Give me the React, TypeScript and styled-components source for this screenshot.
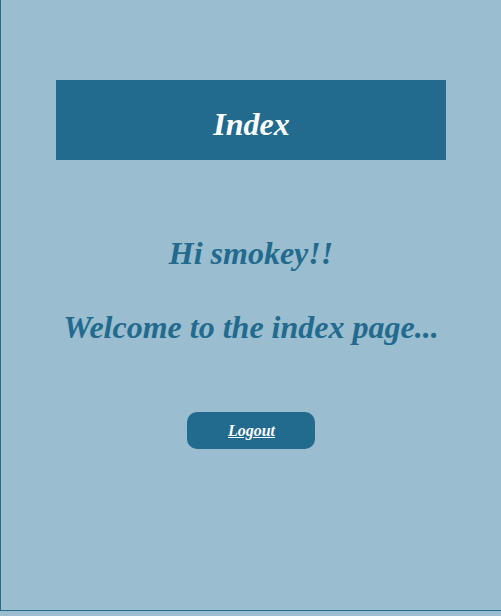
import React from "react";
import styled, { createGlobalStyle } from "styled-components";

const GlobalStyle = createGlobalStyle`
  html, body {
    margin: 0;
    padding: 0;
    background: #9abecf;
  }
  body {
    font-family: "Liberation Serif", "Times New Roman", serif;
  }
`;

const Page = styled.div`
  box-sizing: border-box;
  width: 502px;
  height: 611px;
  border-left: 1px solid #226a8e;
  border-bottom: 1px solid #226a8e;
  background: #9abecf;
  display: flex;
  flex-direction: column;
  align-items: center;
  padding-top: 80px;
`;

const Header = styled.header`
  width: 390px;
  height: 80px;
  background: #226a8e;
  display: flex;
  align-items: center;
  justify-content: center;
  margin-right: 2px;
`;

const Title = styled.h1`
  margin: 8px 0 0 2px;
  color: #ffffff;
  font-size: 32px;
  font-style: italic;
  font-weight: bold;
  line-height: 37px;
`;

const Greeting = styled.h2<{ $gap: number }>`
  margin: ${({ $gap }) => $gap}px 1px 0 0;
  color: #226a8e;
  font-size: 32px;
  font-style: italic;
  font-weight: bold;
  line-height: 37px;
`;

const LogoutButton = styled.a`
  margin: 66px 2px 0 0;
  width: 128px;
  height: 37px;
  border-radius: 10px;
  background: #226a8e;
  color: #ffffff;
  display: flex;
  align-items: center;
  justify-content: center;
  padding-left: 2px;
  box-sizing: border-box;
  font-size: 16px;
  font-style: italic;
  font-weight: bold;
  text-decoration: underline;
  cursor: pointer;
`;

export default function App() {
  return (
    <>
      <GlobalStyle />
      <Page>
        <Header>
          <Title>Index</Title>
        </Header>
        <Greeting $gap={75}>Hi smokey!!</Greeting>
        <Greeting $gap={37}>Welcome to the index page...</Greeting>
        <LogoutButton>Logout</LogoutButton>
      </Page>
    </>
  );
}
